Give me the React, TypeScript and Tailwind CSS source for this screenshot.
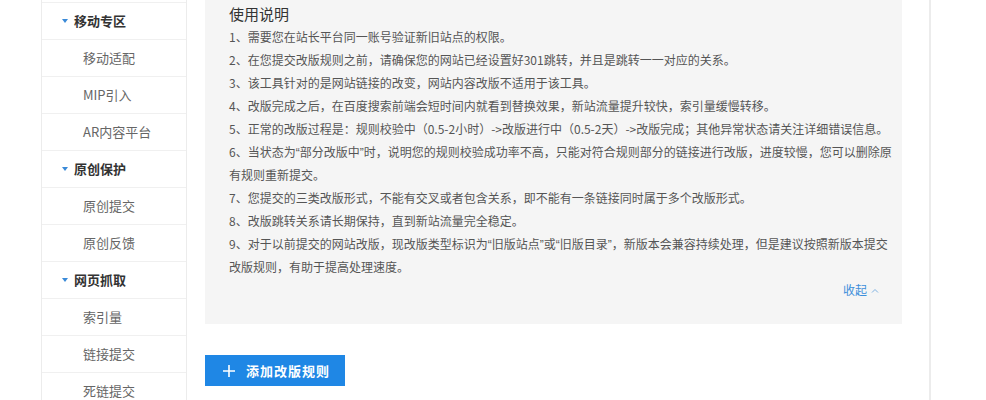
const font = { fontFamily: '"Microsoft YaHei", "Noto Sans CJK SC", sans-serif' };

type NavItem = { label: string; group?: boolean };

const nav: NavItem[] = [
  { label: '移动专区', group: true },
  { label: '移动适配' },
  { label: 'MIP引入' },
  { label: 'AR内容平台' },
  { label: '原创保护', group: true },
  { label: '原创提交' },
  { label: '原创反馈' },
  { label: '网页抓取', group: true },
  { label: '索引量' },
  { label: '链接提交' },
  { label: '死链提交' },
];

const lines = [
  '1、需要您在站长平台同一账号验证新旧站点的权限。',
  '2、在您提交改版规则之前，请确保您的网站已经设置好301跳转，并且是跳转一一对应的关系。',
  '3、该工具针对的是网站链接的改变，网站内容改版不适用于该工具。',
  '4、改版完成之后，在百度搜索前端会短时间内就看到替换效果，新站流量提升较快，索引量缓慢转移。',
  '5、正常的改版过程是：规则校验中（0.5-2小时）->改版进行中（0.5-2天）->改版完成；其他异常状态请关注详细错误信息。',
  '6、当状态为“部分改版中”时，说明您的规则校验成功率不高，只能对符合规则部分的链接进行改版，进度较慢，您可以删除原',
  '有规则重新提交。',
  '7、您提交的三类改版形式，不能有交叉或者包含关系，即不能有一条链接同时属于多个改版形式。',
  '8、改版跳转关系请长期保持，直到新站流量完全稳定。',
  '9、对于以前提交的网站改版，现改版类型标识为“旧版站点”或“旧版目录”，新版本会兼容持续处理，但是建议按照新版本提交',
  '改版规则，有助于提高处理速度。',
];

// curly quotes are full-width in the CJK font, the reference shows them narrow
function Line({ text }: { text: string }) {
  const parts = text.split(/([“”])/);
  return (
    <div className="h-[23px] text-[12px] leading-[23px] text-[#555] whitespace-nowrap">
      {parts.map((p, i) =>
        p === '“' || p === '”' ? (
          <span key={i} className="leading-none" style={{ fontFamily: '"Liberation Sans", sans-serif' }}>
            {p}
          </span>
        ) : (
          <span key={i}>{p}</span>
        ),
      )}
    </div>
  );
}

function Sidebar() {
  return (
    <div className="w-[146px] shrink-0 pt-[2px] border-x border-[#ececec]">
      <div className="border-t border-[#f0f0f0]">
        {nav.map((item) => (
          <div
            key={item.label}
            className="h-[37px] flex items-center border-b border-[#f0f0f0] whitespace-nowrap"
          >
            {item.group ? (
              <div className="flex items-center pl-[20px]">
                <span className="w-0 h-0 border-x-[3px] border-x-transparent border-t-[4px] border-t-[#3a8ad8] mr-[6px]" />
                <span className="text-[13px] font-bold text-[#333]">{item.label}</span>
              </div>
            ) : (
              <span className="pl-[41px] text-[13px] text-[#666]">{item.label}</span>
            )}
          </div>
        ))}
      </div>
    </div>
  );
}

export default function App() {
  return (
    <div className="h-[400px] overflow-hidden bg-white flex" style={font}>
      <div className="w-[41px] shrink-0" />
      <Sidebar />
      <div className="w-[18px] shrink-0" />
      <div className="w-[697px] shrink-0">
        <div className="bg-[#f5f5f5] pl-[24px] pr-[22px] pt-[2px] pb-[23px]">
          <div className="text-[15px] leading-[23px] text-[#333]">使用说明</div>
          {lines.map((l) => (
            <Line key={l} text={l} />
          ))}
          <div className="flex justify-end items-center h-[23px] text-[12px] text-[#3d8fdb]">
            <span>收起</span>
            <svg width="10" height="10" viewBox="0 0 10 10" className="ml-[3px] mt-[2px]">
              <path d="M2 6.5 L5 3.5 L8 6.5" fill="none" stroke="#7fb2e3" strokeWidth="1" />
            </svg>
          </div>
        </div>
        <div className="mt-[31px]">
          <button className="w-[140px] h-[31px] bg-[#1f87e5] text-white flex items-center pl-[17px]">
            <svg width="14" height="14" viewBox="0 0 14 14">
              <path d="M7 1 V13 M1 7 H13" stroke="white" strokeWidth="1.6" />
            </svg>
            <span className="ml-[10px] text-[13px] font-bold tracking-[1px]">添加改版规则</span>
          </button>
        </div>
      </div>
      <div className="w-[27px] shrink-0" />
      <div className="w-[2px] h-full bg-[#ececec] shrink-0" />
    </div>
  );
}
